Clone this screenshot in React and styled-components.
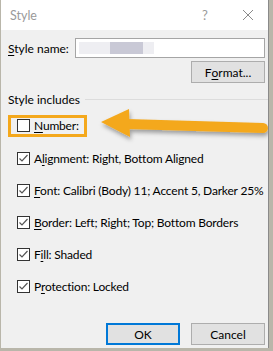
import styled, { createGlobalStyle } from 'styled-components';

const GlobalStyle = createGlobalStyle`
  html, body {
    margin: 0;
    padding: 0;
    background: #b9b6aa;
  }
  body {
    font-family: Lato, 'Noto Sans', sans-serif;
    font-size: 12px;
    color: #000;
  }
`;

const Dialog = styled.div`
  position: relative;
  margin-left: 1px;
  width: 268px;
  height: 348px;
  background: #f0f0f0;
  border-right: 1px solid #8a8a8a;
  box-sizing: border-box;
  overflow: hidden;
  white-space: nowrap;
`;

const TitleBar = styled.div`
  height: 30px;
  background: #fff;
  display: flex;
  align-items: center;
  padding-left: 9px;
  color: #9a9a9a;
  font-size: 12.5px;
`;

const Title = styled.span`
  flex: 1;
`;

const Help = styled.span`
  width: 20px;
  margin-right: 27px;
  text-align: center;
  font-size: 13px;
`;

const Close = styled.span`
  width: 12px;
  height: 12px;
  margin-right: 14px;
  display: flex;
`;

const Body = styled.div`
  padding: 8px 3px 0 7px;
`;

const NameRow = styled.div`
  display: flex;
  align-items: center;
  height: 20px;
`;

const Label = styled.span`
  width: 67px;
`;

const NameInput = styled.div`
  flex: 1;
  height: 20px;
  box-sizing: border-box;
  border: 1px solid #a5a5a5;
  background: #fff;
  display: flex;
  align-items: center;
  padding-left: 3px;
`;

const Blur = styled.div`
  width: 75px;
  height: 12px;
  background: linear-gradient(to right, #eeeef2 0 31px, #c9c9d6 31px 64px, #eeeef2 64px);
`;

const ButtonRow = styled.div`
  display: flex;
  justify-content: flex-end;
  gap: 11px;
  margin-top: ${(p) => p.$top}px;
`;

const Button = styled.div`
  width: 74px;
  height: 22px;
  box-sizing: border-box;
  border: ${(p) => (p.$primary ? '2px solid #0078d7' : '1px solid #adadad')};
  background: #e1e1e1;
  display: flex;
  align-items: center;
  justify-content: center;
`;

const GroupHeader = styled.div`
  display: flex;
  align-items: center;
  margin-top: 6px;
  height: 20px;
  margin-right: -3px;
  gap: 5px;
`;

const Rule = styled.div`
  flex: 1;
  height: 1px;
  background: #dcdcdc;
`;

const Row = styled.div`
  display: flex;
  align-items: center;
  height: ${(p) => p.$h || 32}px;
  padding-left: ${(p) => (p.$highlight ? 0 : 9)}px;
  letter-spacing: -0.18px;
`;

const Highlight = styled.div`
  display: flex;
  align-items: center;
  border: 3px solid #f4a81c;
  padding: 0 5px 0 6px;
  height: 16px;
`;

const Box = styled.span`
  width: 13px;
  height: 13px;
  box-sizing: border-box;
  border: 1px solid #333;
  background: #fff;
  margin-right: 4px;
  display: flex;
  align-items: center;
  justify-content: center;
`;

const U = styled.span`
  text-decoration: underline;
  text-underline-offset: 2px;
`;

const Arrow = styled.svg`
  position: absolute;
  left: 94px;
  top: 104px;
  overflow: visible;
`;

const Check = ({ checked }) => (
  <Box>
    {checked && (
      <svg width="11" height="11" viewBox="0 0 11 11">
        <polyline points="1.5,5.5 4,8 9.5,2" fill="none" stroke="#555" strokeWidth="1.2" />
      </svg>
    )}
  </Box>
);

const items = [
  { k: 'A', u: 'l', pre: 'A', post: 'ignment: Right, Bottom Aligned' },
  { k: 'F', u: 'F', pre: '', post: 'ont: Calibri (Body) 11; Accent 5, Darker 25%' },
  { k: 'B', u: 'B', pre: '', post: 'order: Left; Right; Top; Bottom Borders' },
  { k: 'Fi', u: 'i', pre: 'F', post: 'll: Shaded' },
  { k: 'P', u: 'r', pre: 'P', post: 'otection: Locked' },
];

export default function App() {
  return (
    <>
      <GlobalStyle />
      <Dialog>
        <TitleBar>
          <Title>Style</Title>
          <Help>?</Help>
          <Close>
            <svg width="12" height="12" viewBox="0 0 12 12">
              <path d="M1 1 L11 11 M11 1 L1 11" stroke="#8a8a8a" strokeWidth="1" />
            </svg>
          </Close>
        </TitleBar>
        <Body>
          <NameRow>
            <Label>
              <U>S</U>tyle name:
            </Label>
            <NameInput>
              <Blur />
            </NameInput>
          </NameRow>
          <ButtonRow $top={3}>
            <Button>
              F<U>o</U>rmat...
            </Button>
          </ButtonRow>
          <GroupHeader>
            <span>Style includes</span>
            <Rule />
          </GroupHeader>
          <Row $highlight $h={33}>
            <Highlight>
              <Check />
              <span>
                <U>N</U>umber:
              </span>
            </Highlight>
          </Row>
          {items.map((it) => (
            <Row key={it.k}>
              <Check checked />
              <span>
                {it.pre}
                <U>{it.u}</U>
                {it.post}
              </span>
            </Row>
          ))}
          <ButtonRow $top={21}>
            <Button $primary>OK</Button>
            <Button>Cancel</Button>
          </ButtonRow>
        </Body>
        <Arrow width="178" height="40" viewBox="0 0 178 40">
          <defs>
            <filter id="sh" x="-10%" y="-30%" width="120%" height="180%">
              <feDropShadow dx="1" dy="3" stdDeviation="2" floodColor="#000" floodOpacity="0.35" />
            </filter>
          </defs>
          <g filter="url(#sh)">
            <line x1="32" y1="20" x2="168" y2="24" stroke="#f4a81c" strokeWidth="10" strokeLinecap="round" />
            <polygon points="6,18 34,5 35,33" fill="#f4a81c" />
          </g>
        </Arrow>
      </Dialog>
    </>
  );
}
